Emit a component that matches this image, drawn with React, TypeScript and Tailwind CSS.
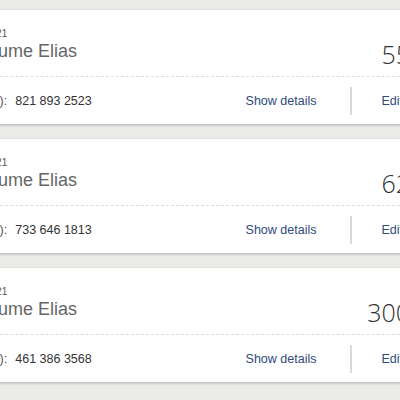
import React from 'react';

const contacts = [
  { date: '2021', name: 'Jaume Elias', amount: '55', phone: '821 893 2523' },
  { date: '2021', name: 'Jaume Elias', amount: '62', phone: '733 646 1813' },
  { date: '2021', name: 'Jaume Elias', amount: '300', phone: '461 386 3568' },
];

const ContactCard = ({ date, name, amount, phone }: { date: string; name: string; amount: string; phone: string }) => {
  return (
    <div className="bg-white h-[114px] flex flex-col shadow-[0_1px_3px_rgba(0,0,0,0.25)]">
      <div className="h-[67px] flex justify-between items-start border-b border-dashed border-[#dcdcdc] pl-[79px] pr-[70px]">
        <div className="pt-[18px]">
          <div className="ml-[6px] text-[10px] leading-[12px] text-[#555]">{date}</div>
          <div className="mt-[1px] text-[18px] leading-[20px] text-[#666]">{name}</div>
        </div>
        <div className="pt-[29px] text-[25px] leading-[30px] text-[#333] font-light font-['Open_Sans',sans-serif]">
          {amount}
        </div>
      </div>
      <div className="flex-1 flex items-center pl-[25px] pr-[77px] text-[12.5px] leading-[16px]">
        <div className="flex-1 flex text-[#333]">
          <span className="ml-[-6px] text-[#555]">Phone (mobile):</span>
          <span className="ml-[8px]">{phone}</span>
        </div>
        <span className="text-[#2e4a7d]">Show details</span>
        <div className="ml-[34px] mr-[29px] w-[2px] h-[28px] bg-[#dadada]" />
        <span className="text-[#2e4a7d]">Edit</span>
      </div>
    </div>
  );
};

export default function App() {
  return (
    <div className="w-[400px] h-[400px] overflow-hidden bg-[#ebebe8] font-['Liberation_Sans',Arial,sans-serif]">
      <div className="ml-[-100px] w-[580px] pt-[10px] flex flex-col gap-[15px]">
        {contacts.map((c, i) => (
          <ContactCard key={i} {...c} />
        ))}
      </div>
    </div>
  );
}
